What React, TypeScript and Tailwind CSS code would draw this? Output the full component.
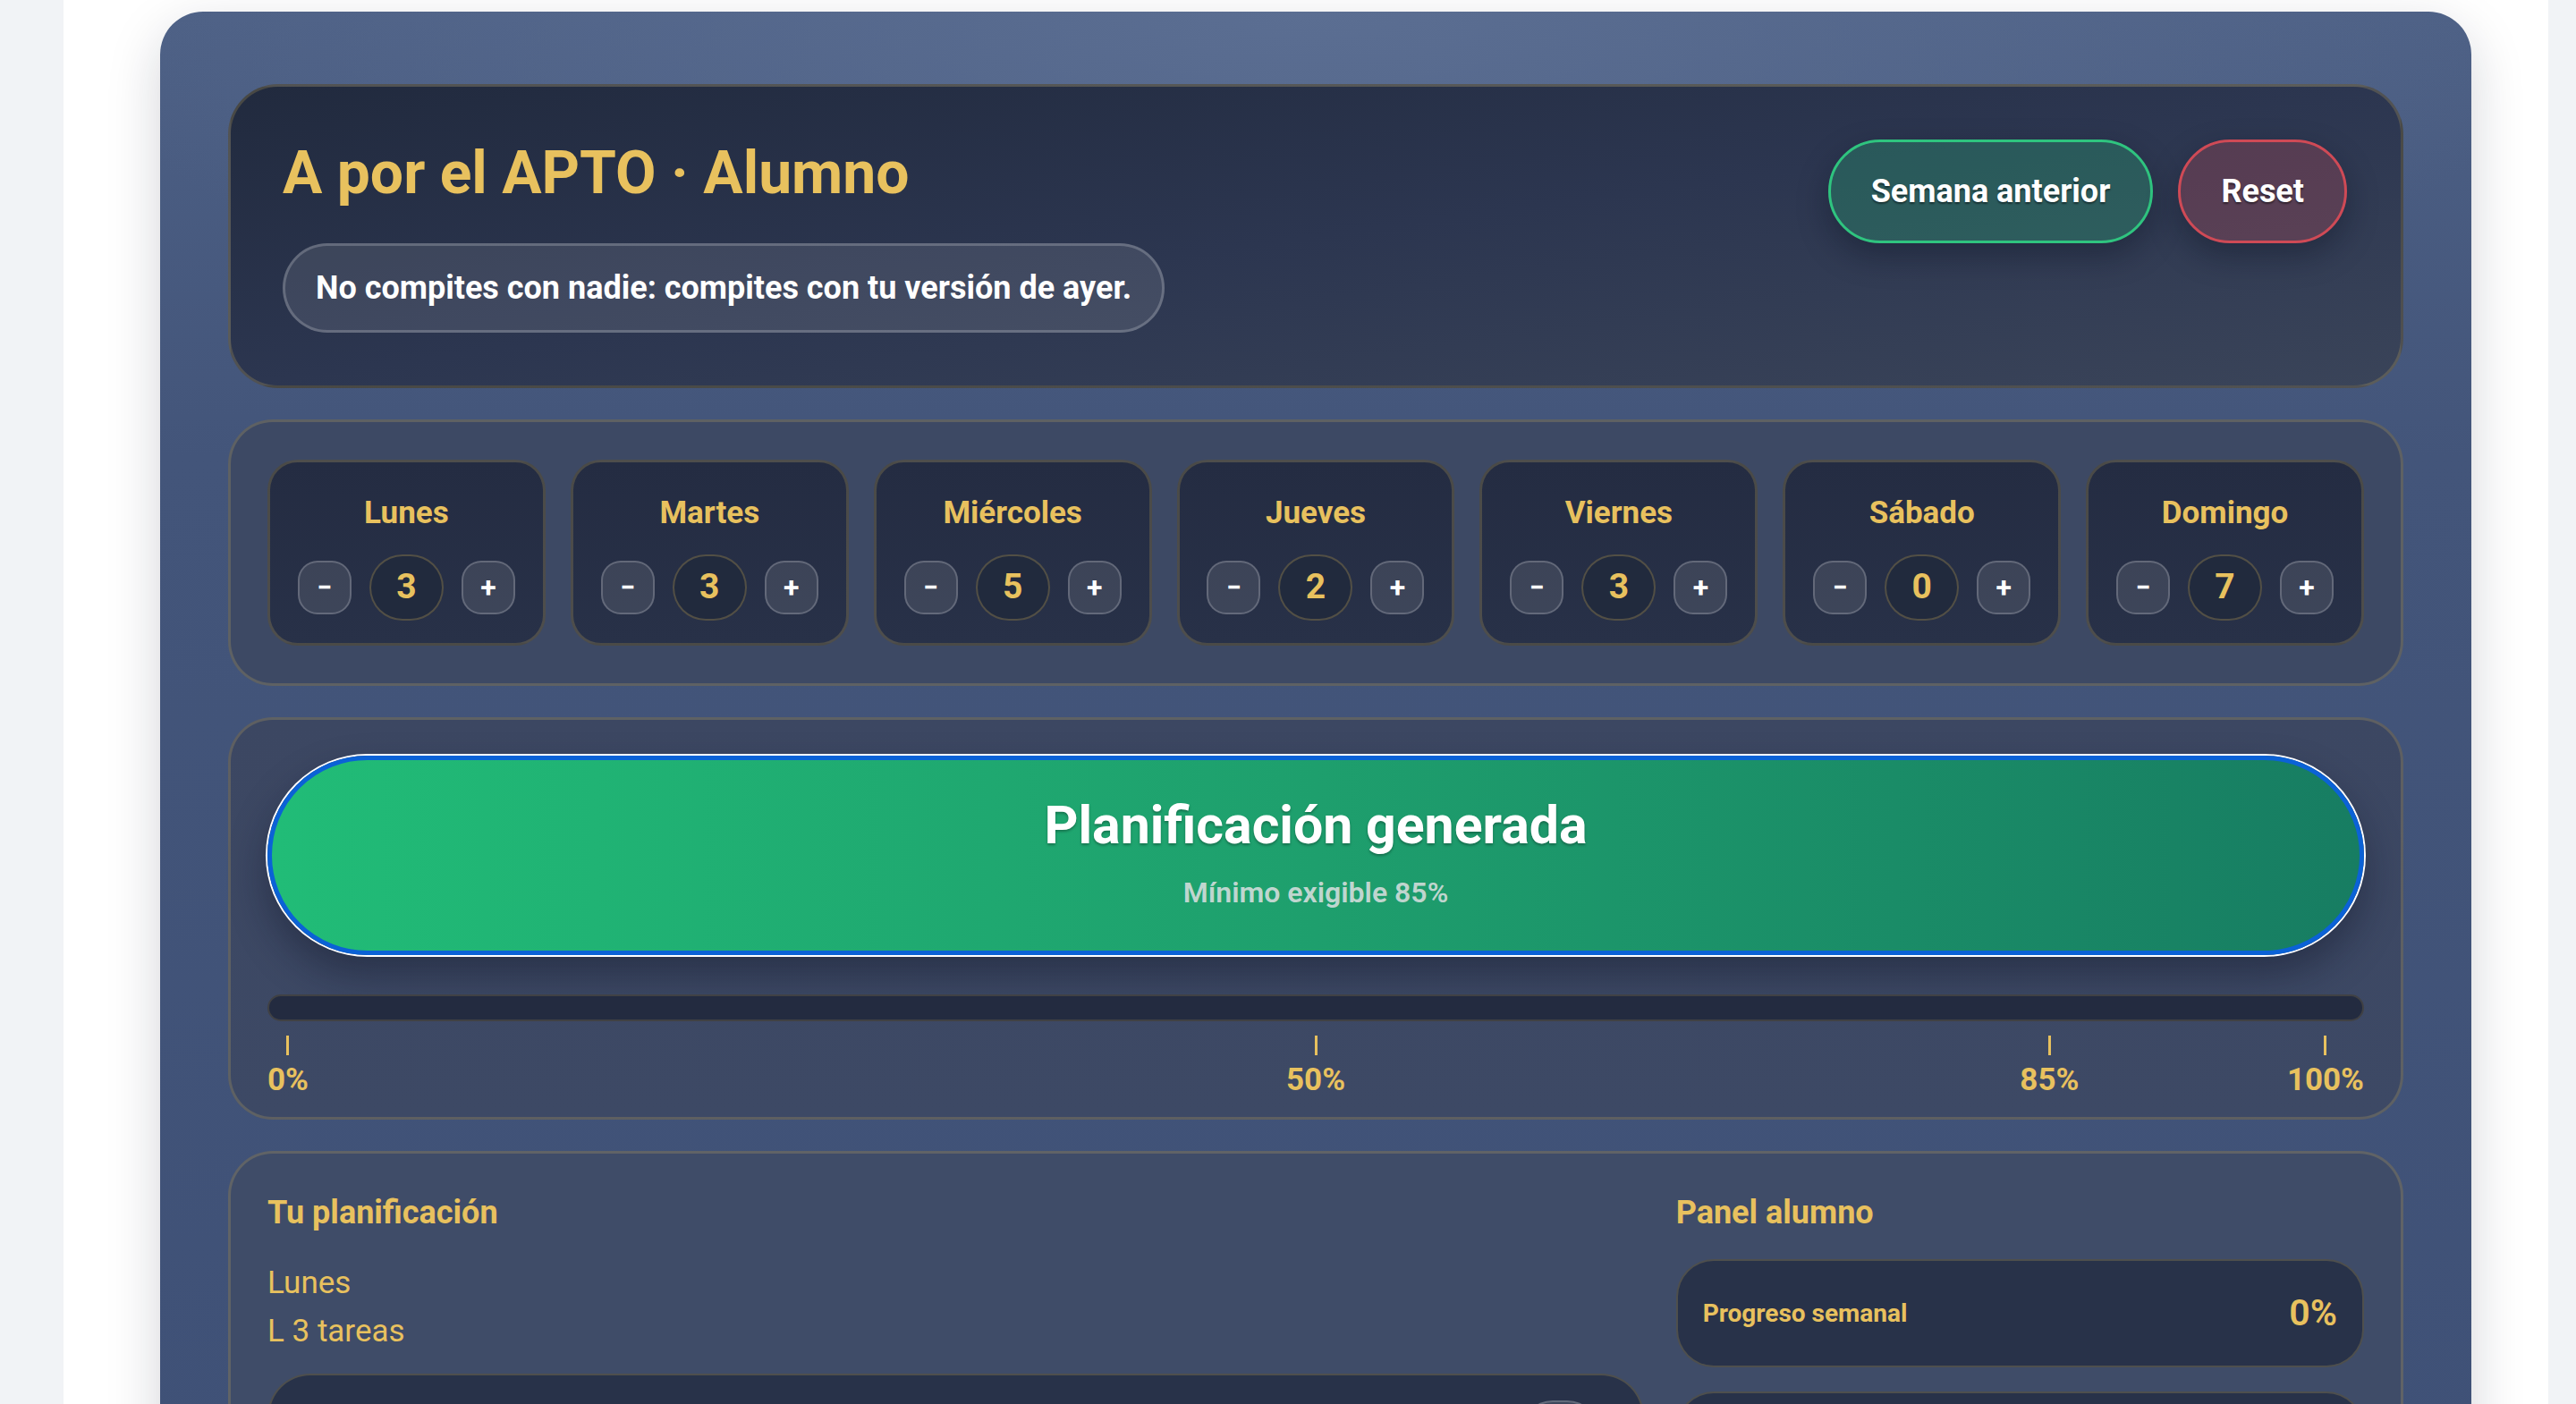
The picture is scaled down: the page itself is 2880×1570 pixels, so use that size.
import { useState } from 'react';

const GOLD = 'text-[#e8c15e]';

interface Day {
  name: string;
  count: number;
}

const initialDays: Day[] = [
  { name: 'Lunes', count: 3 },
  { name: 'Martes', count: 3 },
  { name: 'Miércoles', count: 5 },
  { name: 'Jueves', count: 2 },
  { name: 'Viernes', count: 3 },
  { name: 'Sábado', count: 0 },
  { name: 'Domingo', count: 7 },
];

function DayCard({ day, onChange }: { day: Day; onChange: (delta: number) => void }) {
  return (
    <div className="flex h-[208px] flex-col items-center justify-center gap-[25px] rounded-[34px] border-[3px] border-[#e8c15e]/20 bg-linear-to-b from-[#242c42] to-[#283148] pt-[10px]">
      <div className={`text-[35px] font-bold leading-[42px] ${GOLD}`}>{day.name}</div>
      <div className="flex items-center gap-[20px]">
        <button
          type="button"
          onClick={() => onChange(-1)}
          className="flex h-[60px] w-[60px] items-center justify-center rounded-[22px] border-2 border-white/20 bg-white/10 text-[30px] font-bold leading-none text-white"
        >
          −
        </button>
        <div className={`flex h-[74px] w-[83px] items-center justify-center rounded-full border-2 border-[#e8c15e]/25 bg-[#212a3d] text-[39px] font-bold ${GOLD}`}>
          {day.count}
        </div>
        <button
          type="button"
          onClick={() => onChange(1)}
          className="flex h-[60px] w-[60px] items-center justify-center rounded-[22px] border-2 border-white/20 bg-white/10 text-[32px] font-bold leading-none text-white"
        >
          +
        </button>
      </div>
    </div>
  );
}

export default function App() {
  const [days, setDays] = useState<Day[]>(initialDays);

  const change = (i: number, delta: number) => {
    setDays((prev) => prev.map((d, idx) => (idx === i ? { ...d, count: Math.max(0, d.count + delta) } : d)));
  };

  return (
    <div className="min-h-screen bg-[#f1f3f6] pl-[71px] pr-[31px] font-['Roboto',sans-serif]">
      <div className="min-h-screen bg-white pl-[108px] pr-[86px] pt-[13px]">
        <main className="flex flex-col gap-[35px] rounded-[48px] bg-[radial-gradient(ellipse_55%_420px_at_50%_0%,#5b6e92_0%,rgba(91,110,146,0)_100%),linear-gradient(180deg,#4d6085_0px,#43557a_500px,#3e5076_100%)] px-[76px] pb-[80px] pt-[81px] shadow-[0_20px_60px_rgba(15,23,42,0.18)]">
          {/* Header */}
          <section className="flex items-start justify-between rounded-[56px] border-[3px] border-[#e8c15e]/20 bg-linear-to-br from-[#212a3e] via-[#2c3650] to-[#3a4459] pb-[59px] pl-[58px] pr-[60px] pt-[58px]">
            <div className="flex flex-col items-start">
              <h1 className={`text-[66px] font-bold leading-[77px] ${GOLD}`}>A por el APTO · Alumno</h1>
              <div className="mt-[40px] flex h-[100px] items-center rounded-full border-[3px] border-white/20 bg-white/10 px-[34px] text-[36px] font-bold text-white">
                No compites con nadie: compites con tu versión de ayer.
              </div>
            </div>
            <div className="mt-[1px] flex gap-[28px]">
              <button
                type="button"
                className="h-[116px] rounded-full border-[3px] border-[#2fc47f] bg-[#22c57a]/25 px-[45px] text-[36px] font-bold text-white shadow-[0_14px_34px_rgba(10,15,30,0.35)] [text-shadow:0_2px_2px_rgba(0,0,0,0.45)]"
              >
                Semana anterior
              </button>
              <button
                type="button"
                className="h-[116px] rounded-full border-[3px] border-[#cf4a56] bg-[#d04a56]/25 px-[45px] text-[36px] font-bold text-white shadow-[0_14px_34px_rgba(10,15,30,0.35)] [text-shadow:0_2px_2px_rgba(0,0,0,0.45)]"
              >
                Reset
              </button>
            </div>
          </section>

          {/* Days */}
          <section className="grid grid-cols-7 gap-[28px] rounded-[50px] border-[3px] border-[#e8c15e]/20 bg-[#3d4964] px-[41px] py-[42px]">
            {days.map((d, i) => (
              <DayCard key={d.name} day={d} onChange={(delta) => change(i, delta)} />
            ))}
          </section>

          {/* Progress */}
          <section className="rounded-[50px] border-[3px] border-[#e8c15e]/20 bg-linear-to-b from-[#3c4762] to-[#3d4965] px-[41px] pb-[21px] pt-[40px]">
            <button
              type="button"
              className="flex h-[223px] w-full flex-col items-center justify-center gap-[22px] rounded-full border-[5px] border-[#0b62d6] bg-linear-to-r from-[#21bc77] via-[#1e9f6d] to-[#177d62] pb-[8px] shadow-[0_22px_44px_rgba(12,18,36,0.4)] ring-2 ring-white"
            >
              <span className="text-[59px] font-bold leading-[70px] text-white [text-shadow:0_2px_3px_rgba(0,0,0,0.3)]">
                Planificación generada
              </span>
              <span className="text-[32px] font-semibold leading-[37px] text-[#d6dedd]/90">Mínimo exigible 85%</span>
            </button>

            <div className="mt-[44px] h-[30px] rounded-full border-2 border-[#e8c15e]/15 bg-[#232b40]" />

            <div className="relative mt-[16px] h-[70px]">
              <div className="absolute left-0 top-0 flex flex-col items-center">
                <div className="h-[22px] w-[3px] bg-[#e8c15e]" />
                <div className={`mt-[7px] text-[35px] font-bold leading-[41px] ${GOLD}`}>0%</div>
              </div>
              <div className="absolute left-[50%] top-0 flex -translate-x-1/2 flex-col items-center">
                <div className="h-[22px] w-[3px] bg-[#e8c15e]" />
                <div className={`mt-[7px] text-[35px] font-bold leading-[41px] ${GOLD}`}>50%</div>
              </div>
              <div className="absolute left-[85%] top-0 flex -translate-x-1/2 flex-col items-center">
                <div className="h-[22px] w-[3px] bg-[#e8c15e]" />
                <div className={`mt-[7px] text-[35px] font-bold leading-[41px] ${GOLD}`}>85%</div>
              </div>
              <div className="absolute right-0 top-0 flex flex-col items-center">
                <div className="h-[22px] w-[3px] bg-[#e8c15e]" />
                <div className={`mt-[7px] text-[35px] font-bold leading-[41px] ${GOLD}`}>100%</div>
              </div>
            </div>
          </section>

          {/* Plan + panel */}
          <section className="grid grid-cols-[2fr_1fr] gap-[36px] rounded-[50px] border-[3px] border-[#e8c15e]/20 bg-[#3f4c68] px-[41px] pb-[60px] pt-[45px]">
            <div className="flex flex-col">
              <h2 className={`text-[36px] font-bold leading-[42px] ${GOLD}`}>Tu planificación</h2>
              <div className={`mt-[39px] text-[35px] leading-[38px] ${GOLD}`}>Lunes</div>
              <div className={`mt-[16px] text-[35px] leading-[38px] ${GOLD}`}>L 3 tareas</div>
              <div className="mt-[28px] flex h-[300px] items-start justify-end rounded-[48px] border-2 border-[#e8c15e]/20 bg-[#283249] pr-[47px] pt-[28px]">
                <div className="h-[74px] w-[90px] rounded-full border-2 border-white/20 bg-white/10" />
              </div>
            </div>
            <div className="flex flex-col">
              <h2 className={`text-[36px] font-bold leading-[42px] ${GOLD}`}>Panel alumno</h2>
              <div className="mt-[31px] flex h-[121px] items-center justify-between rounded-[42px] border-2 border-[#e8c15e]/20 bg-[#283249] pl-[28px] pr-[28px]">
                <span className={`text-[28px] font-bold ${GOLD}`}>Progreso semanal</span>
                <span className={`text-[41px] font-semibold ${GOLD}`}>0%</span>
              </div>
              <div className="mt-[27px] h-[121px] rounded-[42px] border-2 border-[#e8c15e]/20 bg-[#283249]" />
            </div>
          </section>
        </main>
      </div>
    </div>
  );
}
